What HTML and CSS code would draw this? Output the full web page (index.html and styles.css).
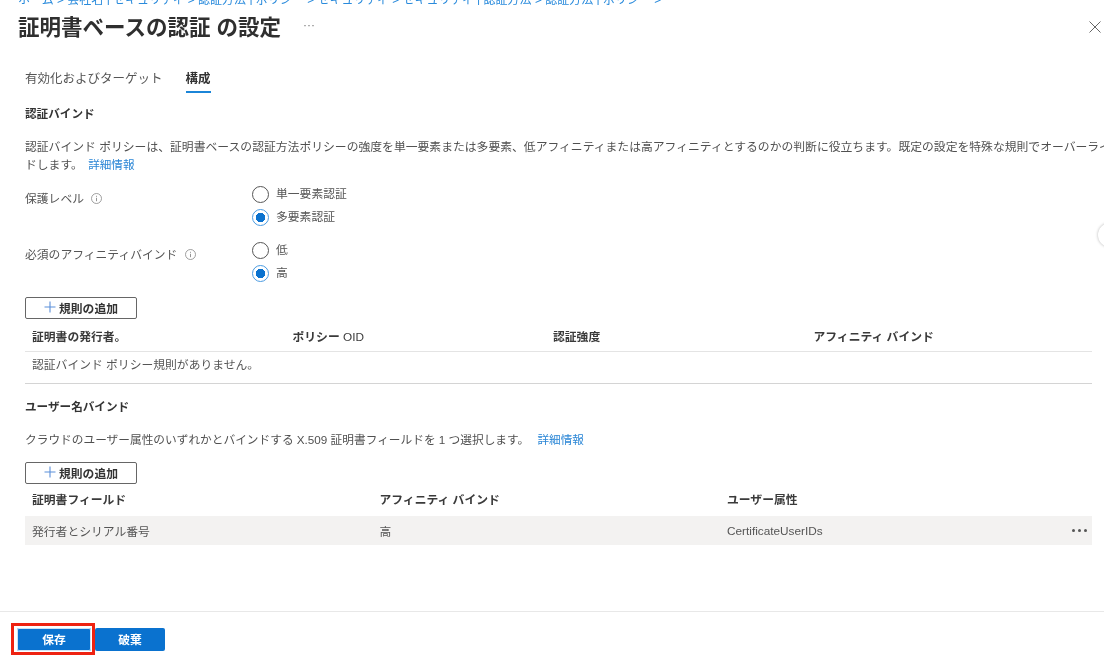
FILE: index.html
```html
<!DOCTYPE html>
<html lang="ja">
<head>
<meta charset="utf-8">
<title>証明書ベースの認証 の設定</title>
<link rel="stylesheet" href="styles.css">
</head>
<body>
<div class="page">
  <div class="crumbs">ホーム &gt; 会社名 | セキュリティ &gt; 認証方法 | ポリシー &gt; セキュリティ &gt; セキュリティ | 認証方法 &gt; 認証方法 | ポリシー &gt;</div>
  <header class="head">
    <h1 class="title">証明書ベースの認証 の設定</h1>
    <span class="more">···</span>
    <svg class="close" width="12" height="12" viewBox="0 0 12 12"><path d="M.5.5l11 11M11.5.5l-11 11" stroke="#666" stroke-width="1" fill="none"/></svg>
  </header>
  <nav class="tabs">
    <span class="tab">有効化およびターゲット</span>
    <span class="tab active">構成</span>
  </nav>
  <main class="content">
    <h2 class="section first">認証バインド</h2>
    <p class="desc lead">認証バインド ポリシーは、証明書ベースの認証方法ポリシーの強度を単一要素または多要素、低アフィニティまたは高アフィニティとするのかの判断に役立ちます。既定の設定を特殊な規則でオーバーライ<br>ドします。 <a class="link">詳細情報</a></p>

    <div class="field f1">
      <div class="label">保護レベル <svg class="info" width="11" height="11" viewBox="0 0 11 11"><circle cx="5.5" cy="5.5" r="5" fill="none" stroke="#888" stroke-width=".8"/><path d="M5.5 4.8v3.4M5.5 2.8v1" stroke="#888" stroke-width=".9"/></svg></div>
      <div class="options">
        <div class="option"><span class="radio"></span>単一要素認証</div>
        <div class="option"><span class="radio on"></span>多要素認証</div>
      </div>
    </div>
    <div class="field f2">
      <div class="label">必須のアフィニティバインド <svg class="info" width="11" height="11" viewBox="0 0 11 11"><circle cx="5.5" cy="5.5" r="5" fill="none" stroke="#888" stroke-width=".8"/><path d="M5.5 4.8v3.4M5.5 2.8v1" stroke="#888" stroke-width=".9"/></svg></div>
      <div class="options">
        <div class="option"><span class="radio"></span>低</div>
        <div class="option"><span class="radio on"></span>高</div>
      </div>
    </div>

    <button class="add"><svg width="12" height="12" viewBox="0 0 12 12"><path d="M6 .5v11M.5 6h11" stroke="#5b8fd9" stroke-width="1.1" fill="none"/></svg>規則の追加</button>
    <div class="row head4"><span>証明書の発行者。</span><span>ポリシー <span class="regular">OID</span></span><span>認証強度</span><span>アフィニティ バインド</span></div>
    <div class="empty">認証バインド ポリシー規則がありません。</div>
    <hr class="divider">

    <h2 class="section">ユーザー名バインド</h2>
    <p class="desc single">クラウドのユーザー属性のいずれかとバインドする X.509 証明書フィールドを 1 つ選択します。 <a class="link gap">詳細情報</a></p>
    <button class="add"><svg width="12" height="12" viewBox="0 0 12 12"><path d="M6 .5v11M.5 6h11" stroke="#5b8fd9" stroke-width="1.1" fill="none"/></svg>規則の追加</button>
    <div class="row head3"><span>証明書フィールド</span><span>アフィニティ バインド</span><span>ユーザー属性</span></div>
    <div class="row body3"><span>発行者とシリアル番号</span><span>高</span><span>CertificateUserIDs</span><span class="dots"><i></i><i></i><i></i></span></div>
  </main>
  <footer class="footer">
    <button class="primary save">保存</button>
    <button class="primary discard">破棄</button>
  </footer>
  <span class="edge"></span>
</div>
</body>
</html>
```
FILE: styles.css
```css
* { box-sizing: border-box; }
html, body { margin: 0; padding: 0; }
body {
  background: #fff;
  color: #4a4a4a;
  font-family: "Liberation Sans", "Noto Sans CJK JP", sans-serif;
  font-size: 12px;
}
.page {
  position: relative;
  width: 1104px;
  height: 658px;
  overflow: hidden;
  display: flex;
  flex-direction: column;
  filter: blur(0.3px);
}
.crumbs {
  height: 5px;
  overflow: hidden;
  padding-left: 18px;
  color: #2a8bdc;
  font-size: 12px;
  line-height: 0;
  white-space: nowrap;
}
.head {
  display: flex;
  align-items: center;
  height: 40px;
  padding: 0 3px 0 18px;
}
.title {
  margin: 0;
  font-size: 21.5px;
  font-weight: 700;
  color: #2f2f2f;
  white-space: nowrap;
}
.more { margin-left: 22px; color: #777; font-size: 12px; }
.close { margin-left: auto; margin-top: 4px; }
.tabs {
  display: flex;
  gap: 23px;
  margin-top: 21px;
  padding-left: 25px;
  height: 27px;
}
.tab { font-size: 12.5px; line-height: 26px; color: #555; height: 27px; }
.tab.active {
  font-weight: 700;
  color: #333;
  border-bottom: 2px solid #1b85d8;
}
.content { padding: 0 12px 0 25px; }
.section {
  margin: 0;
  font-size: 11.6px;
  line-height: 16px;
  font-weight: 700;
  color: #333;
}
.section.first { margin-top: 13px; }
.desc { margin: 0; white-space: nowrap; font-size: 11.82px; line-height: 18px; color: #505050; }
.lead { margin-top: 16px; }
.single { margin-top: 16px; font-size: 11.7px; }
.link { color: #2a86d6; margin-left: 2px; font-size: 11.6px; }
.link.gap { margin-left: 5px; }
.field { display: flex; }
.f1 { margin-top: 11px; }
.f2 { margin-top: 15px; }
.label { width: 227px; padding-top: 5px; font-size: 11.8px; line-height: 18px; color: #555; }
.info { vertical-align: -1px; margin-left: 4px; }
.options { display: flex; flex-direction: column; gap: 5px; }
.option { display: flex; align-items: center; gap: 7px; height: 18px; font-size: 11.8px; line-height: 16px; color: #555; }
.radio {
  width: 17px;
  height: 17px;
  border: 1.3px solid #555;
  border-radius: 50%;
  background: #fff;
  flex: none;
}
.radio.on {
  border-color: #4a9ae0;
  background: radial-gradient(circle, #0a72cf 0 4.5px, #fff 5px);
}
.add {
  display: flex;
  align-items: center;
  justify-content: center;
  gap: 3px;
  width: 112px;
  height: 22px;
  padding: 0 0 2px;
  background: #fff;
  border: 1px solid #666;
  border-radius: 2px;
  color: #333;
  font: 700 11.8px "Liberation Sans", "Noto Sans CJK JP", sans-serif;
}
.field + .add { margin-top: 15px; }
.row { display: grid; align-items: center; padding-left: 7px; }
.head4 {
  grid-template-columns: 260.5px 260.5px 260.5px 1fr;
  height: 33px;
  border-bottom: 1px solid #e4e4e4;
  font-weight: 700;
  color: #3a3a3a;
  font-size: 11.8px;
}
.regular { font-weight: 400; }
.empty { height: 31px; padding-left: 7px; line-height: 27px; font-size: 11.8px; color: #555; }
.divider { margin: 0 0 15px; border: 0; border-top: 1px solid #d4d4d4; }
.head3, .body3 { grid-template-columns: 347.5px 347.5px 1fr 20px; }
.head3 { height: 32px; padding-bottom: 4px; font-weight: 700; color: #3a3a3a; font-size: 11.8px; }
.body3 { height: 29px; background: #f3f2f1; font-size: 11.8px; color: #555; }
.single + .add { margin-top: 13px; }
.dots { display: flex; gap: 3px; }
.dots i { width: 3px; height: 3px; border-radius: 50%; background: #555; }
.footer {
  margin-top: auto;
  height: 47px;
  display: flex;
  align-items: flex-start;
  gap: 4px;
  padding: 16px 0 0 17px;
  border-top: 1px solid #e8e8e8;
}
.primary {
  height: 23px;
  padding: 0 0 2px;
  border: 0;
  border-radius: 2px;
  background: #0a72cf;
  color: #fff;
  font: 700 11.8px "Liberation Sans", "Noto Sans CJK JP", sans-serif;
}
.save { position: relative; width: 74px; box-shadow: inset 0 0 0 1px #cfe3f5; }
.save::after {
  content: "";
  position: absolute;
  inset: -5px -4px -4px -6px;
  border: 3px solid #ee2211;
}
.discard { width: 70px; }
.edge {
  position: absolute;
  left: 1098px;
  top: 223px;
  width: 24px;
  height: 24px;
  border-radius: 50%;
  background: #fff;
  box-shadow: 0 0 3px rgba(0,0,0,.3);
}
```
